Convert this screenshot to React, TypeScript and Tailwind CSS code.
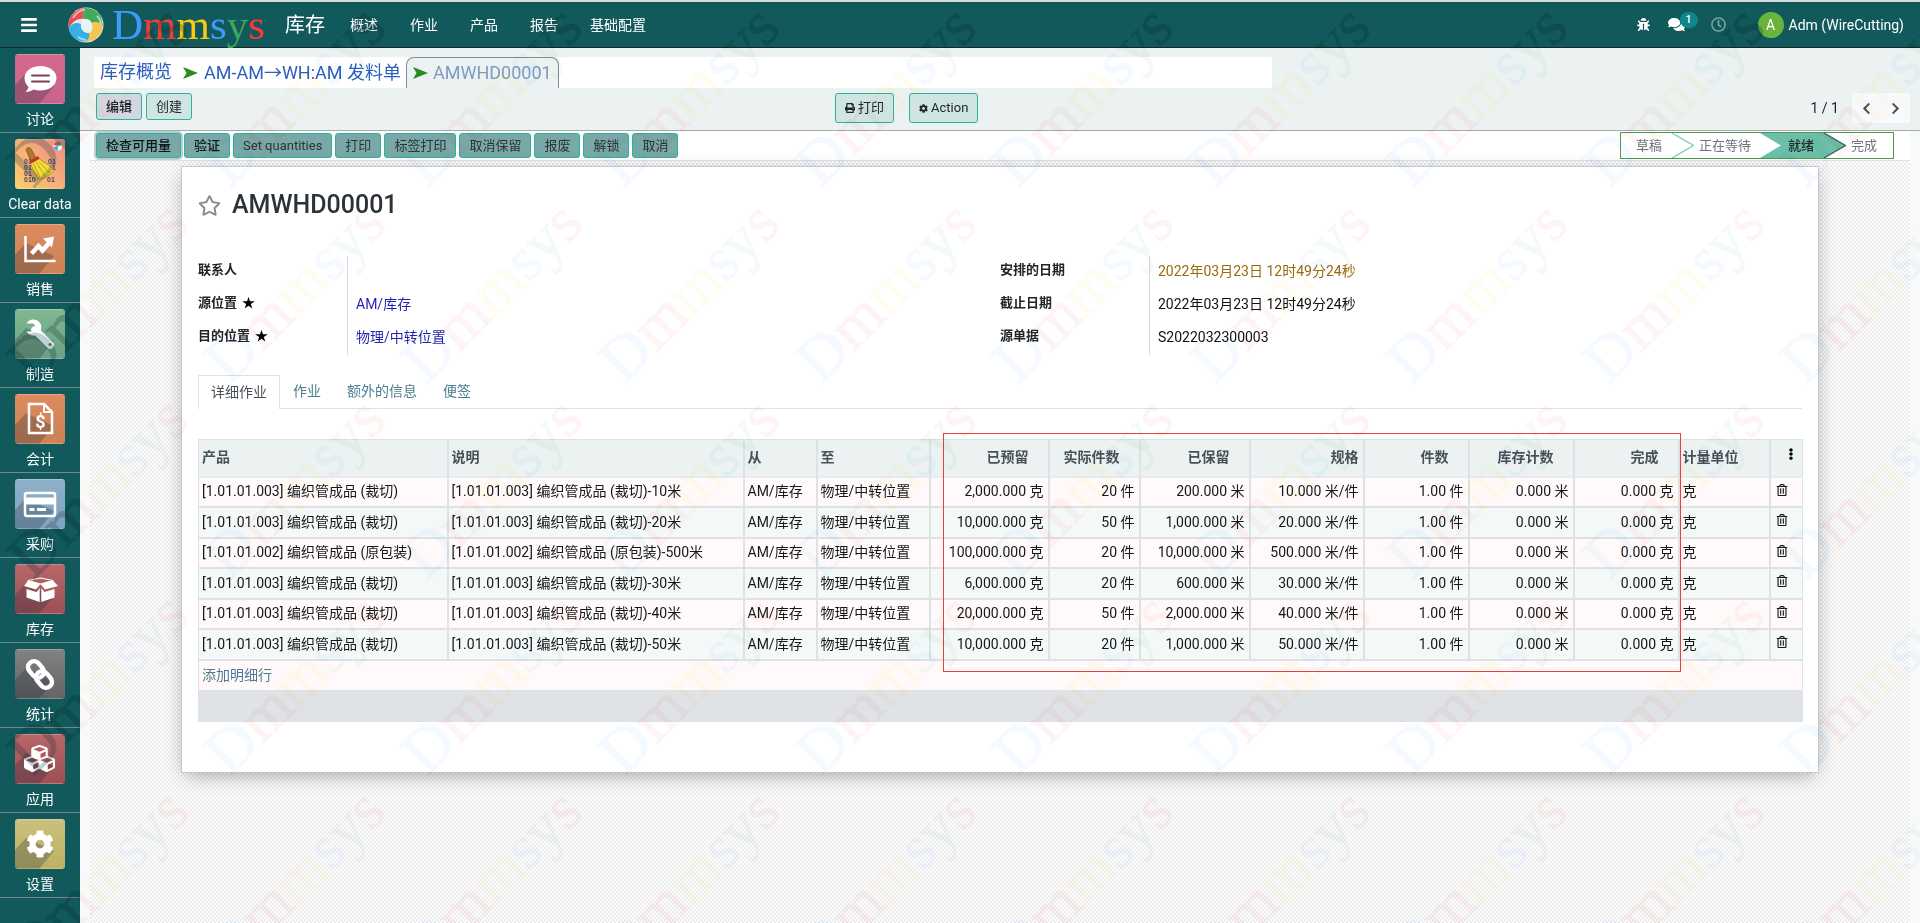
import type { ReactNode } from 'react';
import {
  FaBars,
  FaBoxOpen,
  FaBug,
  FaChevronLeft,
  FaChevronRight,
  FaCog,
  FaComments,
  FaCubes,
  FaEllipsisV,
  FaLink,
  FaPrint,
  FaRegClock,
  FaRegStar,
  FaRegTrashAlt,
  FaWrench,
} from 'react-icons/fa';

interface MenuApp {
  label: string;
  from: string;
  to: string;
  glyph: ReactNode;
}

interface Line {
  product: string;
  note: string;
  reserved: string;
  pieces: string;
  kept: string;
  spec: string;
}

const BRAND = [
  ['D', '#3f9bfb'],
  ['m', '#f93a37'],
  ['m', '#fdc912'],
  ['s', '#3f9bfb'],
  ['y', '#3aa757'],
  ['s', '#f93a37'],
];

const NAV = ['概述', '作业', '产品', '报告', '基础配置'];

const APPS: MenuApp[] = [
  {
    label: '讨论',
    from: '#d6688d',
    to: '#c9638a',
    glyph: (
      <g>
        <path d="M25.500 12c-9 0-16 5-16 12 0 4 2 7 4 9-.5 2-1.500 3.500-3 5 3 0 6-1 8-2.500 2 .5 4.500 1 7 1 9 0 16-5.500 16-12.500s-7-12-16-12z" fill="#fff" />
        <path d="M17 21.500h17M17 27.500h17" stroke="#7c4053" strokeWidth="2" strokeLinecap="round" />
      </g>
    ),
  },
  {
    label: 'Clear data',
    from: '#f08c84',
    to: '#fbd06e',
    glyph: (
      <g>
        <g fill="#4c3c72" fontFamily="Liberation Sans" fontSize="7" fontWeight="700">
          <text x="9" y="25">01</text>
          <text x="9" y="31">01</text>
          <text x="9" y="37">01</text>
          <text x="9" y="43">010</text>
          <text x="33" y="25">01</text>
          <text x="37" y="31">1</text>
          <text x="32" y="43">01</text>
        </g>
        <path d="M11 10.500c1-2 4-2.500 5-.5l5 9-5 3z" fill="#b5762c" stroke="#77501d" strokeWidth=".8" />
        <path d="M15 22l8-4 4 4c4 2 8 5 12 9-3 5-9 8-16 9-2-5-6-10-8-18z" fill="#f4dc3b" stroke="#a28512" strokeWidth=".8" />
        <path d="M18 24l7 14M21 23l9 14M24 23l11 11" stroke="#c6a418" strokeWidth="1" />
        <path d="M14.500 22l8.500-5 1.500 3-8.500 4.500z" fill="#c72d2d" />
        <circle cx="43" cy="7" r="4.500" fill="#eef3f5" />
        <path d="M43 7l-4-1a4 4 0 0 1 4-3.500z" fill="#e4413f" />
        <path d="M43 7V2.500a4.500 4.500 0 0 1 4 3.500z" fill="#3aa757" />
        <path d="M43 7l-4 1a4 4 0 0 0 3.500 3.500z" fill="#3aa0ea" />
      </g>
    ),
  },
  {
    label: '销售',
    from: '#dc8b5f',
    to: '#cc8255',
    glyph: (
      <g>
        <path d="M10.500 12v25h30" fill="none" stroke="#fff" strokeWidth="2.500" />
        <path d="M16.500 29.500l7-7.500 4 4.500 7-8" fill="none" stroke="#fff" strokeWidth="4.500" />
        <path d="M28 14.500l11-2-2 11z" fill="#fff" />
      </g>
    ),
  },
  {
    label: '制造',
    from: '#7fb893',
    to: '#6ba183',
    // open jaw at the top left, handle running to the lower right
    glyph: (
      <g>
        <path d="M20 21l15 15" stroke="#fff" strokeWidth="7.500" strokeLinecap="round" />
        <path d="M11.500 14.500A8 8 0 1 1 11.500 22.500h6.500l2.500-2v-3.500l-2.500-2.500z" fill="#fff" />
        <circle cx="35" cy="35.500" r="1.600" fill="#5d8a72" />
      </g>
    ),
  },
  {
    label: '会计',
    from: '#dc8b5f',
    to: '#cc8255',
    glyph: (
      <g>
        <path d="M14 10h15l8 8v21H14z" fill="none" stroke="#fff" strokeWidth="2.500" />
        <path d="M29 10v8h8" fill="none" stroke="#fff" strokeWidth="2" />
        <text x="25.500" y="34" textAnchor="middle" fill="#fff" fontFamily="Roboto" fontSize="18" fontWeight="700">$</text>
      </g>
    ),
  },
  {
    label: '采购',
    from: '#8fb1c9',
    to: '#7ea3bf',
    glyph: (
      <g>
        <rect x="10" y="14" width="30" height="23" rx="2" fill="none" stroke="#fff" strokeWidth="2.500" />
        <path d="M10 18.500h30v7H10z" fill="#fff" />
        <path d="M14.500 30.500h5M22 30.500h9" stroke="#fff" strokeWidth="3" />
      </g>
    ),
  },
  {
    label: '库存',
    from: '#b8676a',
    to: '#9c4f54',
    // open carton with its four flaps
    glyph: (
      <g fill="#fff">
        <path d="M13 16.500l12.500-2.500L38 16.500l-12.500 3.500z" fill="none" stroke="#fff" strokeWidth="1.200" />
        <path d="M13 16.500l12.500 3.500-4.500 5.500-12-3.500z" />
        <path d="M38 16.500L25.500 20l4.500 5.500 13-3.500z" />
        <path d="M11.500 25l10 3 3.200-4v14l-13.200-4.500z" />
        <path d="M39.500 25l-10 3-3.200-4v14l13.200-4.500z" />
      </g>
    ),
  },
  {
    label: '统计',
    from: '#828282',
    to: '#646464',
    glyph: (
      <g fill="none" stroke="#fff" strokeWidth="4.500">
        <rect x="12" y="14.500" width="18" height="12" rx="6" transform="rotate(50 21 20.500)" />
        <rect x="20" y="24.500" width="18" height="12" rx="6" transform="rotate(50 29 30.500)" />
      </g>
    ),
  },
  {
    label: '应用',
    from: '#b8676a',
    to: '#9c4f54',
    glyph: <FaCubes x={9} y={9} size={31} color="#fff" />,
  },
  {
    label: '设置',
    from: '#cbc07c',
    to: '#bdb165',
    glyph: <FaCog x={11} y={11} size={28} color="#fff" />,
  },
];

const ACTIONS = ['检查可用量', '验证', 'Set quantities', '打印', '标签打印', '取消保留', '报废', '解锁', '取消'];

const LINES: Line[] = [
  { product: '[1.01.01.003] 编织管成品 (裁切)', note: '-10米', reserved: '2,000.000 克', pieces: '20 件', kept: '200.000 米', spec: '10.000 米/件' },
  { product: '[1.01.01.003] 编织管成品 (裁切)', note: '-20米', reserved: '10,000.000 克', pieces: '50 件', kept: '1,000.000 米', spec: '20.000 米/件' },
  { product: '[1.01.01.002] 编织管成品 (原包装)', note: '-500米', reserved: '100,000.000 克', pieces: '20 件', kept: '10,000.000 米', spec: '500.000 米/件' },
  { product: '[1.01.01.003] 编织管成品 (裁切)', note: '-30米', reserved: '6,000.000 克', pieces: '20 件', kept: '600.000 米', spec: '30.000 米/件' },
  { product: '[1.01.01.003] 编织管成品 (裁切)', note: '-40米', reserved: '20,000.000 克', pieces: '50 件', kept: '2,000.000 米', spec: '40.000 米/件' },
  { product: '[1.01.01.003] 编织管成品 (裁切)', note: '-50米', reserved: '10,000.000 克', pieces: '20 件', kept: '1,000.000 米', spec: '50.000 米/件' },
];

// Repeating diagonal brand mark. shiftY lines the tiles up when the parent does not start at the page top.
function Watermark({ id, dark = false, shiftY = 0 }: { id: string; dark?: boolean; shiftY?: number }) {
  return (
    <svg aria-hidden="true" className={`pointer-events-none absolute inset-0 h-full w-full ${dark ? 'opacity-20' : 'opacity-[0.06] mix-blend-multiply'}`}>
      <defs>
        <pattern id={id} y={shiftY} width="197" height="196" patternUnits="userSpaceOnUse">
          <text transform="translate(33 189) rotate(-45)" fontFamily="Liberation Serif" fontSize="63" strokeWidth="1">
            {BRAND.map(([letter, color], i) => (
              <tspan key={i} fill={dark ? '#002a2c' : color} stroke={dark ? '#002a2c' : color}>{letter}</tspan>
            ))}
          </text>
        </pattern>
      </defs>
      <rect width="100%" height="100%" fill={`url(#${id})`} />
    </svg>
  );
}

function Logo() {
  return (
    <svg viewBox="0 0 36 36" className="h-9 w-9">
      <circle cx="18" cy="18" r="17.500" fill="#dfe9ec" />
      <path d="M1 21C-1 10 8 0 20 1c-4 1-7 5-4 11-6-1-11 2-15 9z" fill="#ec4a4c" />
      <path d="M17 1.500C27 0 36 9 34.500 20c-2-4-7-6-11-4-1-3-4-4-7.500-4-2-4-1-8 1-10.500z" fill="#41ab5b" />
      <path d="M34.500 18C35 28 26 36 16 34.500c4-1 6-4 4.500-8.500 4-1 5-5 3-10 4-2 9-1 11 2z" fill="#f5c552" />
      <path d="M1 21c3-5 8-6 12-4-1 4 2 9 8 9 1 5-1 7-4 8.500C8 34.500 1.500 28 1 21z" fill="#38aee6" />
      <path d="M16 12c3.500-.5 7 1 7.500 4 1.500 4 1 8-3 10-5 0-8-4-7.500-9 .5-2 1.500-4 3-5z" fill="#e8f3f4" />
      <path d="M5 11C8 6 12 3 17 2.500M29 9c2 2 4 5 4 8M10 30c3 2 5 3 8 3" fill="none" stroke="#fff" strokeOpacity=".55" strokeWidth="2" />
    </svg>
  );
}

function AppTile({ app, index }: { app: MenuApp; index: number }) {
  return (
    <a href="#" className="flex h-[85px] flex-col items-center border-b border-[#71898d] pt-[6px] text-sm text-white">
      <svg viewBox="0 0 50 50" className="h-[50px] w-[50px]">
        <defs>
          <linearGradient id={`app${index}`} x1={index === 1 ? '1' : '0'} y1="0" x2="0" y2="1">
            <stop offset="0" stopColor={app.from} />
            <stop offset="1" stopColor={app.to} />
          </linearGradient>
        </defs>
        <rect width="50" height="50" rx="3" fill={`url(#app${index})`} />
        {index !== 1 && <path d="M11 19L0 31v16a3 3 0 0 0 3 3h21l15-18z" fill="#1f2b38" opacity=".28" />}
        <path d="M2 .5h46M2 49.500h46" stroke="#fff" strokeOpacity=".25" />
        {app.glyph}
      </svg>
      <span className="mt-[3px] leading-6">{app.label}</span>
    </a>
  );
}

function Arrow() {
  return (
    <svg viewBox="0 0 15 12" className="h-3 w-[15px] shrink-0">
      <path d="M0 0l15 6-15 6 3.500-6z" fill="#2b8a22" />
    </svg>
  );
}

function Field({ label, required, children }: { label: string; required?: boolean; children?: ReactNode }) {
  return (
    <div className="flex h-[33px]">
      <dt className="flex w-[150px] items-start gap-[5px] border-r border-[#d9dcdf] pt-1 text-[13px] leading-5 font-bold text-[#212529]">
        {label}
        {required && <span className="text-black">★</span>}
      </dt>
      <dd className="pt-[5px] pl-2 text-sm leading-5 text-[#111]">{children}</dd>
    </div>
  );
}

const th = 'border-r-2 border-[#dee2e6] px-[3px] pb-[2px] text-left font-bold';
const thNum = 'border-r-2 border-[#dee2e6] pr-[19px] pb-[2px] text-right font-bold';
const td = 'border-r-2 border-[#dee2e6] px-[3px] pb-px';
const tdNum = 'border-r-2 border-[#dee2e6] px-1 pb-px text-right';

function LinesTable() {
  return (
    <table className="w-full table-fixed border-collapse border border-[#dee2e6] text-sm leading-5 whitespace-nowrap text-[#151719]">
      <colgroup>
        <col className="w-[249px]" />
        <col className="w-[296px]" />
        <col className="w-[73px]" />
        <col className="w-[113px]" />
        <col className="w-[119px]" />
        <col className="w-[91px]" />
        <col className="w-[110px]" />
        <col className="w-[114px]" />
        <col className="w-[105px]" />
        <col className="w-[105px]" />
        <col className="w-[105px]" />
        <col className="w-[91px]" />
        <col className="w-[33px]" />
      </colgroup>
      <thead>
        <tr className="h-[37px] border-b-2 border-[#e6ebf0] bg-[#ebf2f1] text-[#495057]">
          <th className={th}>产品</th>
          <th className={th}>说明</th>
          <th className={th}>从</th>
          <th className={th}>至</th>
          <th className={thNum}>已预留</th>
          <th className={thNum}>实际件数</th>
          <th className={thNum}>已保留</th>
          <th className="border-r-2 border-[#dee2e6] px-1 pb-[2px] text-right font-bold">规格</th>
          <th className={thNum}>件数</th>
          <th className={thNum}>库存计数</th>
          <th className={thNum}>完成</th>
          <th className={th}>计量单位</th>
          <th>
            <button type="button" aria-label="Columns" className="mb-2 ml-[14px] block text-black">
              <FaEllipsisV size={12} />
            </button>
          </th>
        </tr>
      </thead>
      <tbody>
        {LINES.map((line, i) => (
          <tr key={i} className="border-b-2 border-[#dee2e6] odd:h-[30px] odd:bg-[#fffaf9] even:h-[31px] even:bg-[#f4f9f8]">
            <td className={td}>{line.product}</td>
            <td className={td}>{line.product + line.note}</td>
            <td className={td}>AM/库存</td>
            <td className={td}>物理/中转位置</td>
            <td className={tdNum}>{line.reserved}</td>
            <td className={tdNum}>{line.pieces}</td>
            <td className={tdNum}>{line.kept}</td>
            <td className={tdNum}>{line.spec}</td>
            <td className={tdNum}>1.00 件</td>
            <td className={tdNum}>0.000 米</td>
            <td className={tdNum}>0.000 克</td>
            <td className={td}>克</td>
            <td>
              <button type="button" aria-label="Delete" className="mb-1 ml-[5px] block">
                <FaRegTrashAlt size={12} />
              </button>
            </td>
          </tr>
        ))}
        <tr className="h-[30px] bg-[#fffaf9]">
          <td colSpan={13} className="px-[3px] pb-px">
            <a href="#" className="text-[#4c7c91]">添加明细行</a>
          </td>
        </tr>
      </tbody>
      <tfoot>
        <tr className="h-8 bg-[#dfe3e6]">
          <td colSpan={13} />
        </tr>
      </tfoot>
    </table>
  );
}

export default function App() {
  return (
    <div className="relative flex min-h-screen flex-col bg-[#f8f9fb] font-[Roboto,'Noto_Sans_CJK_SC',sans-serif] text-[#212529]">
      <header className="relative flex h-12 items-center border-t-2 border-b border-t-[#d5d9da] border-b-[#1b2428] bg-[#12595b] pr-4 text-white">
        <button type="button" aria-label="Menu" className="ml-5">
          <FaBars size={18} />
        </button>
        <a href="#" className="ml-[30px] flex items-center gap-2">
          <Logo />
          <span className="font-['Liberation_Serif',serif] text-[43px] leading-[44px]">
            {BRAND.map(([letter, color], i) => (
              <span key={i} style={{ color }}>{letter}</span>
            ))}
          </span>
        </a>
        <a href="#" className="ml-5 text-xl">库存</a>
        <nav className="ml-[9px] flex text-sm">
          {NAV.map((item) => (
            <a key={item} href="#" className="px-4">{item}</a>
          ))}
        </nav>
        <div className="ml-auto flex items-center text-sm">
          <button type="button" aria-label="Debug">
            <FaBug size={13} />
          </button>
          <button type="button" aria-label="Messages" className="relative ml-[18px]">
            <FaComments size={17} />
            <span className="absolute -top-1 left-3 flex h-4 w-[18px] items-center justify-center rounded-full bg-[#0f868c] text-[11px] font-medium">1</span>
          </button>
          <button type="button" aria-label="Activities" className="ml-[26px] text-[#7ea9a9]">
            <FaRegClock size={15} />
          </button>
          <button type="button" className="ml-8 flex items-center gap-[5px]">
            <span className="flex h-[26px] w-[26px] items-center justify-center rounded-full bg-[#6cb33e]">A</span>
            Adm (WireCutting)
          </button>
        </div>
        <Watermark id="wm-header" dark shiftY={-2} />
      </header>

      <div className="flex flex-1">
        <aside className="relative w-20 shrink-0 bg-[#12595b]">
          {APPS.map((app, i) => (
            <AppTile key={app.label} app={app} index={i} />
          ))}
          <Watermark id="wm-side" dark shiftY={-48} />
        </aside>

        <main className="flex min-w-0 flex-1 flex-col">
          <div className="h-[83px] border-b border-[#a5abab] bg-[#ebf2f1] pt-[9px]">
            <nav className="ml-[14px] flex h-[31px] w-[64%] items-stretch bg-white pl-[6px] text-lg leading-[30px] text-[#2c5fbe]">
              <a href="#">库存概览</a>
              <a href="#" className="flex items-center gap-[6px] pr-[5px] pl-[11px]">
                <Arrow />
                AM-AM→WH:AM 发料单
              </a>
              <span className="flex items-center gap-[5px] rounded-t-lg border border-b-0 border-[#7f9092] bg-[#ebf2f1] px-[6px] text-[#7c9cc0]">
                <Arrow />
                AMWHD00001
              </span>
            </nav>
            <div className="mt-[5px] mr-[10px] ml-4 flex items-start text-[13px] leading-5">
              <div className="flex w-[739px] gap-1">
                <button type="button" className="h-[27px] w-[46px] rounded-[3px] border border-[#2bb596] bg-[#d4d5e3] font-medium">编辑</button>
                <button type="button" className="h-[27px] w-[46px] rounded-[3px] border border-[#2bb596] bg-[#cfe5e4]">创建</button>
              </div>
              <button type="button" className="flex h-[30px] items-center gap-[3px] rounded-[3px] border border-[#2bb596] bg-[#cfe5e4] px-[9px]">
                <FaPrint size={10} />
                打印
              </button>
              <button type="button" className="ml-[15px] flex h-[30px] items-center gap-[3px] rounded-[3px] border border-[#2bb596] bg-[#cfe5e4] px-[9px]">
                <FaCog size={9} />
                Action
              </button>
              <div className="ml-auto flex h-[30px] items-center">
                <span className="mr-[13px] text-sm">1 / 1</span>
                <button type="button" aria-label="Previous" className="flex h-[30px] w-[29px] items-center justify-center bg-[#f8f9fb] text-[#495057]">
                  <FaChevronLeft size={13} />
                </button>
                <button type="button" aria-label="Next" className="flex h-[30px] w-[29px] items-center justify-center bg-[#f8f9fb] text-[#495057]">
                  <FaChevronRight size={13} />
                </button>
              </div>
            </div>
          </div>

          <div className="mx-[10px] flex flex-1 flex-col bg-[conic-gradient(#ececec_25%,#fdfdfd_0_50%,#ececec_0_75%,#fdfdfd_0)] bg-[length:4px_4px]">
            <div className="flex h-[30px] justify-between border-b border-[#dee2e6] bg-white pt-px pr-4 pl-[6px] text-[13px] leading-5">
              <div className="flex gap-[3px] pt-px">
                {ACTIONS.map((action, i) => (
                  <button
                    key={action}
                    type="button"
                    className={`h-[25px] rounded-[3px] border border-[#2bb596] bg-[#79a8a8] px-[9px] ${
                      i === 0 ? 'font-medium text-[#0d1516] shadow-[0_0_0_2px_#bccdd6]' : i === 1 ? 'font-medium text-[#0d1516]' : 'text-[#2d3335]'
                    }`}
                  >
                    {action}
                  </button>
                ))}
              </div>
              <div className="flex h-[27px] items-center border border-[#4a9c4a] bg-white text-[#6c757d]">
                <span className="pl-[15px]">草稿</span>
                <svg viewBox="0 0 22 25" className="ml-[10px] h-[25px] w-[22px]">
                  <path d="M0 0l21.500 12.500L0 25" fill="none" stroke="#7fcbb6" strokeWidth="1.200" />
                </svg>
                <span className="pr-[9px] pl-[5px]">正在等待</span>
                <svg viewBox="0 0 22 25" className="h-[25px] w-[22px]">
                  <path d="M0 0h22v25H0l21-12.500z" fill="#6dbfa8" />
                </svg>
                <span className="h-[25px] bg-[#6dbfa8] pr-[10px] pl-[6px] leading-[25px] font-medium text-[#1d2b2a]">就绪</span>
                <svg viewBox="0 0 22 25" className="h-[25px] w-[22px]">
                  <path d="M0 0l21.500 12.500L0 25z" fill="#6dbfa8" />
                  <path d="M0 0l21.500 12.500L0 25" fill="none" stroke="#3b5f63" strokeWidth="1.200" />
                </svg>
                <span className="pr-4 pl-[5px]">完成</span>
              </div>
            </div>

            <section className="mx-[91px] mt-[5px] border border-[#c6c8d3] bg-white px-4 pt-5 pb-[50px] shadow-[0_5px_20px_-5px_rgba(0,0,0,0.4)]">
              <h1 className="flex h-9 items-center gap-[11px] text-[25px] font-medium text-[#2c3237]">
                <FaRegStar size={23} color="#868b90" />
                AMWHD00001
              </h1>
              <div className="mt-[33px] grid grid-cols-2">
                <dl>
                  <Field label="联系人" />
                  <Field label="源位置" required>
                    <a href="#" className="text-[#221fae]">AM/库存</a>
                  </Field>
                  <Field label="目的位置" required>
                    <a href="#" className="text-[#221fae]">物理/中转位置</a>
                  </Field>
                </dl>
                <dl>
                  <Field label="安排的日期">
                    <span className="text-[#9a6b0c]">2022年03月23日 12时49分24秒</span>
                  </Field>
                  <Field label="截止日期">2022年03月23日 12时49分24秒</Field>
                  <Field label="源单据">S2022032300003</Field>
                </dl>
              </div>

              <div role="tablist" className="mt-5 flex h-[34px] border-b border-[#dee2e6] text-sm text-[#4c7c91]">
                <button type="button" role="tab" aria-selected="true" className="-mb-px border border-b-0 border-[#dee2e6] bg-white px-3 pb-[2px] text-[#495057]">详细作业</button>
                <button type="button" role="tab" aria-selected="false" className="px-[13px] pb-px">作业</button>
                <button type="button" role="tab" aria-selected="false" className="px-[13px] pb-px">额外的信息</button>
                <button type="button" role="tab" aria-selected="false" className="px-[13px] pb-px">便签</button>
              </div>

              <div className="relative mt-[30px]">
                <LinesTable />
                <div className="pointer-events-none absolute -top-[6px] right-[121px] left-[745px] h-[239px] border border-[#f23b3b]" />
              </div>
            </section>
          </div>
        </main>
      </div>
      <Watermark id="wm-page" />
    </div>
  );
}
